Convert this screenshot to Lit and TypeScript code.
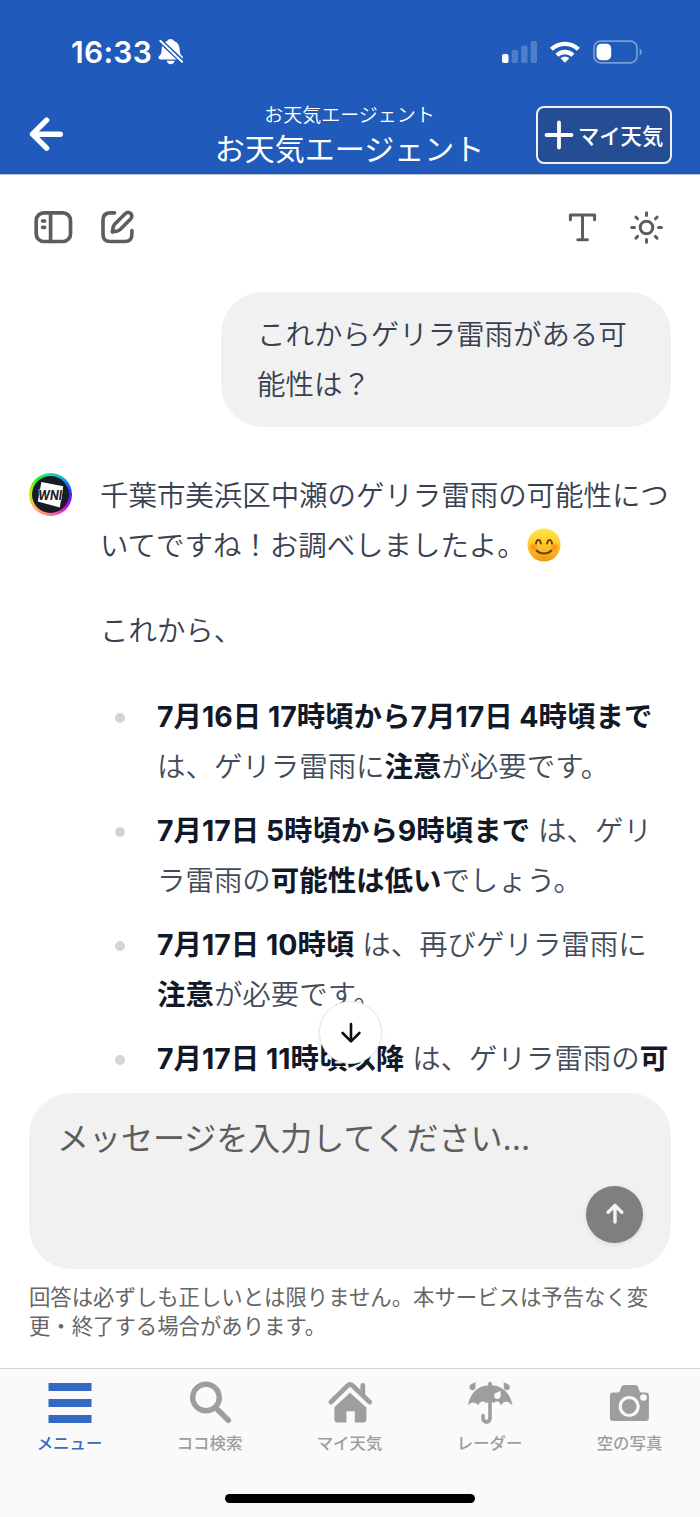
import { LitElement, html, css, svg, nothing } from "lit";
import { customElement } from "lit/decorators.js";

interface Part {
  text: string;
  strong?: boolean;
}

interface Tab {
  label: string;
  icon: unknown;
  active?: boolean;
}

const b = (text: string): Part => ({ text, strong: true });
const t = (text: string): Part => ({ text });

const forecasts: Part[][][] = [
  [[b("7月16日 17時頃から7月17日 4時頃まで")], [t("は、ゲリラ雷雨に"), b("注意"), t("が必要です。")]],
  [[b("7月17日 5時頃から9時頃まで"), t(" は、ゲリ")], [t("ラ雷雨の"), b("可能性は低い"), t("でしょう。")]],
  [[b("7月17日 10時頃"), t(" は、再びゲリラ雷雨に")], [b("注意"), t("が必要です。")]],
  [[b("7月17日 11時頃以降"), t(" は、ゲリラ雷雨の"), b("可")]],
];

const tabs: Tab[] = [
  {
    label: "メニュー",
    active: true,
    icon: svg`<path d="M8.5 3h43v8h-43zM8.5 19h43v8h-43zM8.5 35h43v8h-43z" fill="currentColor"/>`,
  },
  {
    label: "ココ検索",
    icon: svg`<circle cx="26" cy="17.5" r="13.3" fill="none" stroke="currentColor" stroke-width="5.4"/>
      <path d="M36 28l12.3 12.3" fill="none" stroke="currentColor" stroke-width="5.6" stroke-linecap="round"/>`,
  },
  {
    label: "マイ天気",
    icon: svg`<path d="M14.400 27.300L30 12.800l16.400 14.800v11.600a3.200 3.200 0 0 1-3.200 3.200h-8.400V31.200h-8.400v11.200h-8.800a3.200 3.200 0 0 1-3.200-3.200z" fill="currentColor"/>
      <path d="M11 22L27.600 5.600q2.400-2.300 4.800 0L49.600 22" fill="none" stroke="#fafafa" stroke-width="9" stroke-linejoin="round"/>
      <path d="M11 22L27.600 5.600q2.400-2.300 4.800 0L49.600 22" fill="none" stroke="currentColor" stroke-width="4.800" stroke-linecap="round" stroke-linejoin="round"/>
      <path d="M42.800 5.500v9" fill="none" stroke="currentColor" stroke-width="4.800" stroke-linecap="round"/>`,
  },
  {
    label: "レーダー",
    icon: svg`<path d="M8 25.500C10 12.500 18.500 5.800 28.200 5.300V3.600a1.900 1.900 0 0 1 3.800 0v1.700C42 6 50.200 12.500 52.500 25.500c-3.400-4.500-9-5-11-.6-1.300 0-1.300-1.200-2.600-3.200-2.300-.5-4.300.1-5.400 1.800-.5-1-1.100-1.300-1.700-1.400v15.900c0 7.800-10.600 7.800-10.600-.3v-2.200a1.800 1.800 0 0 1 3.600 0v2.200c0 3 3.400 3 3.400-.4V22.100c-.6.1-1.200.5-1.700 1.400-3-3.200-6.500-2.200-8.100 1.800-3-4-7.800-3.800-10.400.2z" fill="currentColor"/>
      <path d="M15.800 1.800v5.400c0 4.600-7 4.200-6.600-.3C9.400 3.700 12 4 15.800 1.800zM43.500 1.800v5.400c0 4.400 6.900 4 6.600-.3-.3-3.100-2.900-3-6.600-5.100z" fill="currentColor" stroke="#fafafa" stroke-width=".5"/>
      <path d="M40.600 10.800v5.200c0 4.200-6.500 4-6.400-.3.100-3.200 3-2.600 6.400-4.900z" fill="#fafafa"/>`,
  },
  {
    label: "空の写真",
    icon: svg`<path d="M13.100 12.400h4.600q1.600 0 2.200-1.500l1.300-3.700q.8-2.200 3-2.200h11q2.200 0 3 2.200l1.300 3.700q.6 1.500 2.200 1.500h4a3.200 3.200 0 0 1 3.200 3.200v22.200a3.200 3.200 0 0 1-3.200 3.200H13.100a3.200 3.200 0 0 1-3.200-3.200V15.600a3.200 3.200 0 0 1 3.200-3.200z" fill="currentColor"/>
      <circle cx="29.200" cy="26.500" r="9" fill="none" stroke="#fafafa" stroke-width="3.200"/>
      <circle cx="43.500" cy="17.500" r="3.300" fill="#fafafa"/>`,
  },
];

@customElement("app-root")
export class AppRoot extends LitElement {
  static styles = css`
    :host {
      display: flex;
      flex-direction: column;
      width: 700px;
      height: 1517px;
      box-sizing: border-box;
      overflow: hidden;
      background: #fff;
      color: #374151;
      font-family: Inter, "Noto Sans CJK JP", sans-serif;
      white-space: nowrap;
    }
    svg {
      display: block;
      flex: none;
    }
    .status {
      flex: none;
      display: flex;
      justify-content: space-between;
      align-items: center;
      height: 104px;
      padding: 0 58px 0 71px;
      box-sizing: border-box;
      background: #205aba;
      color: #fff;
    }
    .clock {
      display: flex;
      align-items: center;
      gap: 5px;
      font-size: 30px;
      font-weight: 580;
      letter-spacing: 0.3px;
    }
    .header {
      flex: none;
      display: grid;
      grid-template-columns: 164px 1fr 164px;
      align-items: center;
      height: 71px;
      box-sizing: border-box;
      border-bottom: 1px solid #bcc3d0;
      background: #205aba;
      color: #fff;
    }
    .back {
      margin: -10px 0 0 28px;
    }
    .titles {
      display: flex;
      flex-direction: column;
      align-items: center;
      margin: -6px 1px 0 0;
    }
    .caption {
      font-size: 19px;
      line-height: 26px;
      font-weight: 350;
    }
    .title {
      margin: 0;
      font-size: 30px;
      line-height: 40px;
      font-weight: 400;
    }
    .add {
      display: flex;
      align-items: center;
      gap: 4px;
      width: 136px;
      height: 58px;
      box-sizing: border-box;
      margin-top: -8px;
      padding: 0 0 1px 6px;
      border: 2px solid #eef2f8;
      border-radius: 8px;
      background: #244d93;
      color: #fff;
      font: 500 21.3px/30px "Noto Sans CJK JP", sans-serif;
    }
    .toolbar {
      flex: none;
      display: flex;
      justify-content: space-between;
      padding: 31px 34px 0 32px;
      height: 117px;
      box-sizing: border-box;
      color: #5d5d5d;
    }
    .group {
      display: flex;
      gap: 22px;
    }
    .group.end {
      gap: 24px;
    }
    .chat {
      position: relative;
      flex: 1;
      min-height: 0;
      padding: 0 29px;
      font-size: 28.450px;
      font-weight: 350;
      line-height: 50px;
      display: flex;
      flex-direction: column;
    }
    .bubble {
      align-self: flex-end;
      width: 450px;
      height: 135px;
      box-sizing: border-box;
      padding: 18px 36px;
      border-radius: 42px;
      background: #f1f1f1;
    }
    .answer {
      display: flex;
      gap: 28px;
      margin-top: 44px;
    }
    .avatar {
      display: grid;
      place-items: center;
      flex: none;
      width: 43px;
      height: 43px;
      margin-top: 2px;
      border-radius: 50%;
      background: conic-gradient(#1fd8a0, #0a9cf5 45deg, #3a20ff 90deg, #c800f0 125deg, #ff5ca0 165deg, #ff9080 200deg, #ffb060 235deg, #c8ee10 275deg, #30f020 315deg, #1fd8a0);
    }
    .mark {
      font: italic 700 13.500px Inter, sans-serif;
    }
    p {
      margin: 0 0 35px;
    }
    p:last-of-type {
      margin-bottom: 36px;
    }
    .emoji {
      display: inline-block;
      vertical-align: -6px;
      margin-left: 1px;
    }
    ul {
      display: flex;
      flex-direction: column;
      gap: 14px;
      margin: 0;
      padding: 0;
      list-style: none;
      color: #414b5a;
    }
    li {
      display: flex;
      align-items: flex-start;
      gap: 32px;
      padding-left: 15px;
    }
    li::before {
      content: "";
      flex: none;
      width: 10px;
      height: 10px;
      margin-top: 21px;
      border-radius: 50%;
      background: #d1d5db;
    }
    strong {
      font-weight: 650;
      color: #111827;
    }
    .down {
      position: absolute;
      left: 319px;
      top: 709px;
      display: grid;
      place-items: center;
      width: 63px;
      height: 63px;
      box-sizing: border-box;
      border: 1.500px solid #e4e4e4;
      border-radius: 50%;
      background: #fff;
      box-shadow: 0 2px 5px rgba(0, 0, 0, 0.06);
      padding: 0;
      color: #0d0d0d;
    }
    .composer {
      flex: none;
      display: flex;
      flex-direction: column;
      justify-content: space-between;
      height: 176px;
      margin: 0 29px;
      box-sizing: border-box;
      padding: 23px 28px 26px;
      border-radius: 42px;
      background: #f1f1f1;
      color: #5d5d5d;
      font-size: 32px;
      line-height: 46px;
    }
    .send {
      display: grid;
      place-items: center;
      align-self: flex-end;
      width: 57px;
      height: 57px;
      padding: 0 0 1px;
      border: 0;
      border-radius: 50%;
      background: #7f7f7f;
      box-shadow: 0 1px 5px rgba(0, 0, 0, 0.1);
      color: #f4f4f4;
    }
    .note {
      flex: none;
      height: 99px;
      box-sizing: border-box;
      padding: 14px 29px 0;
      font-size: 21.380px;
      line-height: 28.500px;
      color: #666;
    }
    .nav {
      flex: none;
      display: flex;
      flex-direction: column;
      align-items: center;
      height: 149px;
      box-sizing: border-box;
      border-top: 1px solid #d5d5d5;
      background: #fafafa;
    }
    .tabs {
      display: grid;
      grid-template-columns: repeat(5, 1fr);
      width: 700px;
      height: 125px;
      padding-top: 11px;
      box-sizing: border-box;
    }
    .tab {
      display: flex;
      flex-direction: column;
      align-items: center;
      color: #9e9e9e;
      font: 500 16.400px/24px "Noto Sans CJK JP", sans-serif;
    }
    .tab.on {
      color: #3469c1;
    }
    .label {
      margin: 4px 1px 0 0;
    }
    .home {
      width: 250px;
      height: 9px;
      border-radius: 5px;
      background: #000;
    }
  `;

  private part(p: Part) {
    return p.strong ? html`<strong>${p.text}</strong>` : p.text;
  }

  private lines(rows: Part[][]) {
    return rows.map((row, i) => html`${i ? html`<br />` : nothing}${row.map((p) => this.part(p))}`);
  }

  render() {
    return html`
      <div class="status">
        <div class="clock">
          <span>16:33</span>
          <svg width="28" height="30" viewBox="156 38 28 30" fill="#fff">
            <path d="M169.600 40c1.700 0 2.900.8 3.400 1.900 4.500 1.800 5.500 5 5.800 9.500.2 3.200 1 4.400 2.400 5.700 1.300 1.300.7 3.400-1.400 3.400h-20.300c-2.100 0-2.700-2.100-1.400-3.400 1.500-1.400 2.400-2.500 2.500-5.700.2-4.500 1.100-7.700 5.600-9.500.5-1.100 1.700-1.900 3.400-1.900zM165.800 61.800h7.800c-.3 4.500-7.500 4.500-7.800 0z" />
            <path d="M158.300 41l24 22.500" stroke="#205aba" stroke-width="5" />
            <path d="M159.200 41.800l21.900 21" stroke="#fff" stroke-width="1.900" stroke-linecap="round" />
          </svg>
        </div>
        <svg width="142" height="28" viewBox="500 38 142 28" fill="#fff">
          <rect x="502" y="54" width="6.500" height="9" rx="1.800" />
          <g opacity=".22">
            <rect x="511.700" y="50" width="6.300" height="13" rx="1.800" />
            <rect x="521.200" y="45.500" width="6.300" height="17.500" rx="1.800" />
            <rect x="530.700" y="41" width="6.300" height="22" rx="1.800" />
          </g>
          <g fill="none" stroke="#fff" stroke-width="4.300">
            <path d="M551.400 49.300a19.300 19.300 0 0 1 27 0" />
            <path d="M556.900 55.300a11.400 11.400 0 0 1 16 0" />
          </g>
          <path d="M560.500 58.300q4.400-3.800 8.800 0l-4.400 4.500z" />
          <rect x="594" y="41.200" width="43" height="21.600" rx="6.500" fill="none" stroke="#fff" stroke-opacity=".4" stroke-width="1.700" />
          <rect x="596.500" y="43.800" width="14.700" height="16.400" rx="4.700" />
          <path d="M639.700 48.500q2.300 1.200 2.300 3.500t-2.300 3.500z" opacity=".4" />
        </svg>
      </div>

      <header class="header">
        <svg class="back" width="38" height="36" viewBox="28 116 38 36" fill="none" stroke="#fff" stroke-width="5.400" stroke-linecap="round" stroke-linejoin="round">
          <path d="M46.600 120.200L32.500 134.200l14.100 14M33 134.200h27.300" />
        </svg>
        <div class="titles">
          <span class="caption">お天気エージェント</span>
          <h1 class="title">お天気エージェント</h1>
        </div>
        <button class="add">
          <svg width="30" height="30" viewBox="0 0 30 30" stroke="#fff" stroke-width="3.800" stroke-linecap="round">
            <path d="M15 2.500v25M2.500 15h25" />
          </svg>
          <span>マイ天気</span>
        </button>
      </header>

      <div class="toolbar">
        <div class="group">
          <svg width="43" height="43" viewBox="32 206 43 43" fill="none" stroke="currentColor" stroke-width="3.700" stroke-linecap="round">
            <rect x="36.200" y="212.900" width="34.300" height="28.600" rx="7.500" />
            <path d="M50.600 213v28.500M42.600 221h2M42.600 227.300h2" />
          </svg>
          <svg width="43" height="43" viewBox="97 206 43 43" fill="none" stroke="currentColor" stroke-width="3.600" stroke-linecap="round" stroke-linejoin="round">
            <path d="M114.500 212.900h-4.200q-7.300 0-7.300 7.300v14q0 7.300 7.300 7.300h14.300q7.300 0 7.300-7.300v-3.700" />
            <path d="M112.300 231.900l1-5.200q.4-1.600 1.600-2.800l10.300-10.100c4-3.700 9 1.200 5.400 5.200l-10.200 10.300q-1.200 1.200-2.900 1.600z" />
          </svg>
        </div>
        <div class="group end">
          <svg width="43" height="43" viewBox="561 206 43 43" fill="none" stroke="currentColor" stroke-width="3" stroke-linecap="round" stroke-linejoin="round">
            <path d="M570.400 219.800v-4.900h24.200v4.900M582.500 215v24.800M577.800 239.800h9.600" />
          </svg>
          <svg width="38" height="43" viewBox="628 206 38 43" fill="none" stroke="currentColor" stroke-width="3" stroke-linecap="round">
            <circle cx="646.500" cy="227.500" r="6.300" />
            <path d="M646.500 212.700v2.800M646.500 239.400v2.800M631.700 227.500h2.800M658.600 227.500h2.800M635.900 217.100l1.700 1.700M655.300 236.400l1.700 1.700M657.100 217.100l-1.700 1.700M637.600 236.400l-1.700 1.700" />
          </svg>
        </div>
      </div>

      <main class="chat">
        <div class="bubble">これからゲリラ雷雨がある可<br />能性は？</div>
        <div class="answer">
          <div class="avatar">
            <svg width="37" height="37" viewBox="3 3 37 37">
              <circle cx="21.500" cy="21.500" r="18.500" fill="#181c24" />
              <path d="M12.400 9l21.800 4.200-3.400 21.300-22-6z" fill="#fff" />
              <text class="mark" x="9" y="26.800" textLength="24" lengthAdjust="spacingAndGlyphs" fill="#181c24" stroke="#fff" stroke-width="1" paint-order="stroke">WNI</text>
            </svg>
          </div>
          <div>
            <p>
              千葉市美浜区中瀬のゲリラ雷雨の可能性につ<br />いてですね！お調べしましたよ。<svg class="emoji" width="34" height="34" viewBox="0 0 34 34">
                <defs>
                  <linearGradient id="face" x1="0" y1="0" x2="0" y2="1">
                    <stop offset="0" stop-color="#ffe64a" />
                    <stop offset=".55" stop-color="#ffc527" />
                    <stop offset="1" stop-color="#f39512" />
                  </linearGradient>
                  <radialGradient id="blush">
                    <stop offset="0" stop-color="#ff5a1f" stop-opacity=".65" />
                    <stop offset="1" stop-color="#ff5a1f" stop-opacity="0" />
                  </radialGradient>
                </defs>
                <circle cx="17" cy="17" r="16.500" fill="url(#face)" />
                <circle cx="6.500" cy="19" r="5" fill="url(#blush)" />
                <circle cx="27.500" cy="19" r="5" fill="url(#blush)" />
                <g fill="none" stroke="#69400b" stroke-width="1.900" stroke-linecap="round">
                  <path d="M9 15.600c.7-5 4.100-5 4.900 0M20.100 15.600c.8-5 4.200-5 4.900 0" />
                  <path d="M9.500 22.500c4.100 4 10.900 4 15 0" />
                </g>
              </svg>
            </p>
            <p>これから、</p>
            <ul>
              ${forecasts.map((rows) => html`<li><div>${this.lines(rows)}</div></li>`)}
            </ul>
          </div>
        </div>
        <button class="down">
          <svg width="22" height="22" viewBox="0 0 22 22" fill="none" stroke="currentColor" stroke-width="2.600" stroke-linecap="round" stroke-linejoin="round">
            <path d="M11 2v17M2.600 11l8.400 8.300 8.400-8.300" />
          </svg>
        </button>
      </main>

      <div class="composer">
        <span>メッセージを入力してください...</span>
        <button class="send">
          <svg width="22" height="22" viewBox="0 0 22 22" fill="none" stroke="currentColor" stroke-width="3.400" stroke-linecap="round" stroke-linejoin="round">
            <path d="M11 19V2.600M4.200 9.200L11 2.400l6.800 6.800" />
          </svg>
        </button>
      </div>
      <div class="note">回答は必ずしも正しいとは限りません。本サービスは予告なく変<br />更・終了する場合があります。</div>

      <footer class="nav">
        <nav class="tabs">
          ${tabs.map(
            (tab) => html`<div class="tab ${tab.active ? "on" : ""}">
              <svg width="60" height="46" viewBox="0 0 60 46">${tab.icon}</svg>
              <span class="label">${tab.label}</span>
            </div>`
          )}
        </nav>
        <div class="home"></div>
      </footer>
    `;
  }
}
